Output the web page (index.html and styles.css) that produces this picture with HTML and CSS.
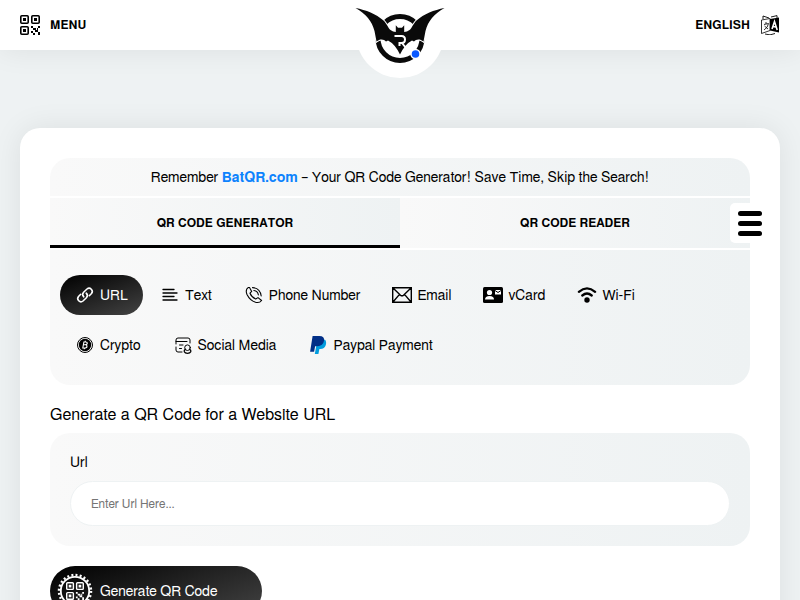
FILE: index.html
```html
<!DOCTYPE html>
<html lang="en">
<head>
<meta charset="UTF-8">
<meta name="viewport" content="width=device-width, initial-scale=1.0">
<title>BatQR - QR Code Generator</title>
<link rel="stylesheet" href="styles.css">
</head>
<body>

<!-- shared QR glyph -->
<svg class="sprite" aria-hidden="true">
  <symbol id="qr" viewBox="0 0 20 20">
    <g fill="none" stroke="currentColor" stroke-width="1.6">
      <rect x="0.8" y="0.8" width="7.4" height="7.4" rx="1"/>
      <rect x="11.8" y="0.8" width="7.4" height="7.4" rx="1"/>
      <rect x="0.8" y="11.8" width="7.4" height="7.4" rx="1"/>
    </g>
    <path fill="currentColor" d="M3 3h3v3H3zM14 3h3v3h-3zM3 14h3v3H3zM11 11h2v2h-2zM18 11h2v2h-2zM13 13h3v2h-3zM15 15h3v2h-3zM11 16h2v2h-2zM13 18h2v2h-2zM18 17h2v3h-2zM17 13h1v2h-1z"/>
  </symbol>
</svg>

<header class="header">
  <button class="header-btn" type="button">
    <svg width="20" height="20"><use href="#qr"/></svg>
    MENU
  </button>
  <a class="logo" href="#" aria-label="BatQR home">
    <svg width="90" height="56" viewBox="0 0 90 56">
      <circle cx="45" cy="30.500" r="22" fill="none" stroke="#0a0a0a" stroke-width="5"/>
      <path d="M0.500 0C11 2 21 6 28.500 12.500C32 16 33 20 35.500 22Q38 24 40.800 24V17.300L43 19.700H47L49.200 17.300V24Q52 24 54.500 22C57 20 58 16 61.500 12.500C69 6 79 2 89.500 0C79 6 73 13 70.500 23L68.500 33.500C65 30.500 61 31 59 33.500L57 32.500Q50 36 45 46.500Q40 36 33 32.500L31 33.500C29 31 25 30.500 21.500 33.500L19.500 23C17 13 11 6 0.500 0Z" stroke="#fff" stroke-width="2" fill="#0a0a0a" paint-order="stroke"/>
      <path d="M39.500 28H46.500Q50 28 50 31.500T46.500 35H44.500V38M47 35L51 40" fill="none" stroke="#fff" stroke-width="2"/>
      <circle cx="60.500" cy="46" r="3.800" fill="#0a58ff" stroke="#fff" stroke-width="3" paint-order="stroke"/>
    </svg>
  </a>
  <button class="header-btn" type="button">
    ENGLISH
    <svg width="20" height="20" viewBox="0 0 20 20">
      <path d="M10 4L19 2.500V17.500L10 15.500Z" fill="#000"/>
      <path d="M1.500 5L10 3.500V15.500L1.500 18.500Z" fill="#fff" stroke="#000" stroke-width="0.8"/>
      <path d="M3 4V1L9 3M11 2L17 0.600V3M5 19Q10 21 15 18.500" fill="none" stroke="#000" stroke-width="0.9"/>
      <path d="M4 9.500L8.500 8.500Q8 12.500 4 15M4.500 11L8 14M6 7V9" fill="none" stroke="#000" stroke-width="0.8"/>
      <path d="M12 14L14.500 6.500L17.200 15M12.800 11.500L16 12" fill="none" stroke="#fff" stroke-width="1.600"/>
    </svg>
  </button>
</header>

<button class="side-toggle" type="button" aria-label="Open side menu">
  <span></span>
  <span></span>
  <span></span>
</button>

<main class="card">
  <p class="notice">Remember <a href="#">BatQR.com</a> – Your QR Code Generator! Save Time, Skip the Search!</p>

  <div class="tabs">
    <button class="tab active" type="button">QR CODE GENERATOR</button>
    <button class="tab" type="button">QR CODE READER</button>
  </div>

  <div class="types">
    <button class="type active" type="button">
      <svg width="20" height="20" viewBox="0 0 20 20" fill="none" stroke="#fff" stroke-width="1.600" stroke-linecap="round">
        <path d="M8.800 11.800A3.200 3.200 0 0 1 8.600 7.300L12 4A3.200 3.200 0 0 1 16.500 8.500L14.300 10.700"/>
        <path d="M11.200 8.200A3.200 3.200 0 0 1 11.400 12.700L8 16A3.200 3.200 0 0 1 3.500 11.500L5.700 9.300"/>
      </svg>
      URL
    </button>
    <button class="type" type="button">
      <svg width="20" height="20" viewBox="0 0 20 20" stroke="#000" stroke-width="1.300" stroke-linecap="round">
        <path d="M3 4.500H14M3 8H17M3 11.500H14M3 15H17"/>
      </svg>
      Text
    </button>
    <button class="type" type="button">
      <svg width="20" height="20" viewBox="0 0 20 20" fill="none" stroke="#000" stroke-width="1.100" stroke-linecap="round" stroke-linejoin="round">
        <path d="M4.300 2.500Q1 4.500 3 9.500Q6 15.500 11.500 17.300Q15.500 18.300 17.600 15.500L14 12.600L11.700 14Q7.500 12 6 8.200L7.700 6.400L5.500 2.500Z"/>
        <path d="M8.500 2.600Q16 2.800 17.200 11M9.800 5.500Q13.800 6 14.400 10"/>
      </svg>
      Phone Number
    </button>
    <button class="type" type="button">
      <svg width="20" height="20" viewBox="0 0 20 20" fill="none" stroke="#000" stroke-width="1.400">
        <path d="M0.700 2.700H19.300V17.300H0.700ZM1 3L8.500 10.200Q10 11.500 11.500 10.200L19 3M1 17L7.500 9.400M19 17L12.500 9.400"/>
      </svg>
      Email
    </button>
    <button class="type" type="button">
      <svg width="20" height="20" viewBox="0 0 20 20">
        <rect y="2" width="20" height="16" rx="1.500" fill="#000"/>
        <circle cx="6.500" cy="7.500" r="2.600" fill="#fff"/>
        <path d="M2 14.500Q2 11 6.500 11T11 14.500Z" fill="#fff"/>
        <rect x="12" y="5" width="6" height="4.500" fill="#fff"/>
        <path d="M12 5.500L15 7.500L18 5.500" fill="none" stroke="#000"/>
      </svg>
      vCard
    </button>
    <button class="type" type="button">
      <svg width="20" height="20" viewBox="0 0 20 20" fill="none" stroke="#000" stroke-width="2.300" stroke-linecap="round">
        <path d="M1.900 6.800Q10 0 18.100 6.800M5.300 10.500Q10 6.500 14.700 10.500"/>
        <circle cx="10" cy="15" r="2.700" fill="#000" stroke="none"/>
      </svg>
      Wi-Fi
    </button>
    <button class="type" type="button">
      <svg width="20" height="20" viewBox="0 0 20 20">
        <circle cx="10" cy="10" r="7.500" fill="#fff" stroke="#000" stroke-width="1"/>
        <circle cx="10" cy="10" r="6.200" fill="#000"/>
        <path d="M9 6.500L7.800 13H10.500Q12.300 12.500 12 11T10.200 9.700H8.800M9.500 9.700H11Q12.500 9 12.300 8T10.800 7H8.500M10.300 5.800V7M9.300 13V14.200" fill="none" stroke="#fff" stroke-width="1.100"/>
      </svg>
      Crypto
    </button>
    <button class="type" type="button">
      <svg width="20" height="20" viewBox="0 0 20 20" fill="none" stroke="#000" stroke-linecap="round">
        <path d="M3 12V15Q3 17 5 17H9M3 9V5Q3 3 5 3H15Q17 3 17 5V8M3 6.500H14M6.500 10H10M6.500 13.500H8.500"/>
        <circle cx="14.500" cy="12.700" r="2.800"/>
        <path d="M12.300 14.300Q10.800 15 11.300 16.800Q12 18.300 14.500 18.300T17.800 16.800Q18.200 15 16.700 14.300" stroke-width="1.300"/>
      </svg>
      Social Media
    </button>
    <button class="type" type="button">
      <svg width="20" height="20" viewBox="0 0 20 20">
        <path d="M6.800 19L8.800 8L16.800 4.500Q18.800 6.500 17.800 10Q16.600 14 12.300 14H11.400L10.400 19Z" fill="#009cde"/>
        <path d="M4.600 1H11.300Q16.800 1 16 5.800Q15.100 11.200 9.300 11.200H7.100L6.100 16.800H2.100Z" fill="#012f87"/>
      </svg>
      Paypal Payment
    </button>
  </div>

  <h1 class="title">Generate a QR Code for a Website URL</h1>

  <form>
    <div class="fields">
      <label for="url">Url</label>
      <input type="text" id="url" placeholder="Enter Url Here...">
    </div>
    <button class="generate" type="submit">
      <svg width="36" height="36" viewBox="0 0 36 36">
        <circle cx="18" cy="18" r="16" fill="none" stroke="#fff" stroke-width="2.500" stroke-dasharray="2 2.190"/>
        <circle cx="18" cy="18" r="14.200" fill="none" stroke="#fff" stroke-width="1.800"/>
        <use href="#qr" x="9" y="9" width="18" height="18"/>
      </svg>
      Generate QR Code
    </button>
  </form>
</main>

</body>
</html>
```
FILE: styles.css
```css
* {
  box-sizing: border-box;
}
body {
  margin: 0;
  font-family: FreeSans, "Liberation Sans", Arial, sans-serif;
  font-kerning: none;
  font-size: 14px;
  line-height: 20px;
  color: #000;
  background-color: #eef2f3;
}
button {
  font: inherit;
  font-kerning: none;
  color: inherit;
  border: none;
  background: none;
  padding: 0;
  cursor: pointer;
}
svg {
  flex-shrink: 0;
}
.sprite {
  position: absolute;
  width: 0;
  height: 0;
}
.header {
  position: relative;
  display: flex;
  justify-content: space-between;
  align-items: center;
  height: 50px;
  padding: 0 20px;
  background-color: #fff;
  box-shadow: 0 0 30px rgba(0,0,0,0.08);
}
.header-btn {
  display: flex;
  align-items: center;
  gap: 10px;
  font-size: 12px;
  font-weight: bold;
}
.logo {
  position: absolute;
  top: -10px;
  left: 50%;
  transform: translateX(-50%);
  display: flex;
  justify-content: center;
  width: 88px;
  height: 88px;
  padding-top: 18px;
  border-radius: 50%;
  background-color: #fff;
}
.side-toggle {
  position: fixed;
  top: 203px;
  right: 30px;
  display: flex;
  flex-direction: column;
  justify-content: center;
  gap: 5px;
  width: 40px;
  height: 40px;
  padding: 0 8px;
  border-radius: 5px;
  background-color: #fff;
}
.side-toggle span {
  height: 5px;
  border-radius: 3px;
  background-color: #000;
}
.card {
  margin: 78px 20px 20px;
  padding: 30px;
  border-radius: 20px;
  background-color: #fff;
  box-shadow: 0 0 30px rgba(0,0,0,0.08);
}
.notice {
  margin: 0;
  padding: 10px 10px 8px;
  text-align: center;
  border-radius: 20px 20px 0 0;
  background: linear-gradient(90deg, #f9f9f9, #eef2f3);
}
.notice a {
  color: #0d83fd;
  font-weight: bold;
  text-decoration: none;
}
.tabs {
  display: flex;
  margin: 2px 0;
}
.tab {
  flex: 1;
  height: 50px;
  font-size: 12px;
  font-weight: bold;
  background: linear-gradient(90deg, #f9f9f9, #eef2f3);
}
.tab.active {
  border-bottom: 3px solid #000;
  padding-top: 3px;
}
.types {
  display: flex;
  flex-wrap: wrap;
  gap: 10px 2px;
  padding: 25px 10px 20px;
  border-radius: 0 0 20px 20px;
  background: linear-gradient(90deg, #f9f9f9, #eef2f3);
}
.type {
  display: flex;
  align-items: center;
  gap: 5px;
  height: 40px;
  padding: 2px 15px 0;
  border-radius: 20px;
}
.type svg,
.generate svg {
  margin-bottom: 2px;
}
.type.active {
  color: #fff;
  background: linear-gradient(160deg, #000, #434343);
}
.title {
  margin: 20px 0 10px;
  font-family: "TeX Gyre Heros", "Liberation Sans", Arial, sans-serif;
  font-kerning: auto;
  font-size: 16px;
  font-weight: normal;
  line-height: 18px;
}
.fields {
  display: flex;
  flex-direction: column;
  gap: 8px;
  padding: 20px;
  border-radius: 20px;
  background: linear-gradient(90deg, #f9f9f9, #eef2f3);
}
.fields input {
  height: 45px;
  padding: 2px 20px 0;
  border: 1px solid #eef2f3;
  border-radius: 25px;
  font: inherit;
  font-kerning: none;
  font-size: 12px;
  background-color: #fff;
}
.generate {
  display: flex;
  align-items: center;
  gap: 7px;
  height: 50px;
  margin-top: 20px;
  padding: 2px 45px 0 7px;
  border-radius: 25px;
  color: #fff;
  background: linear-gradient(160deg, #000, #434343);
}
```
